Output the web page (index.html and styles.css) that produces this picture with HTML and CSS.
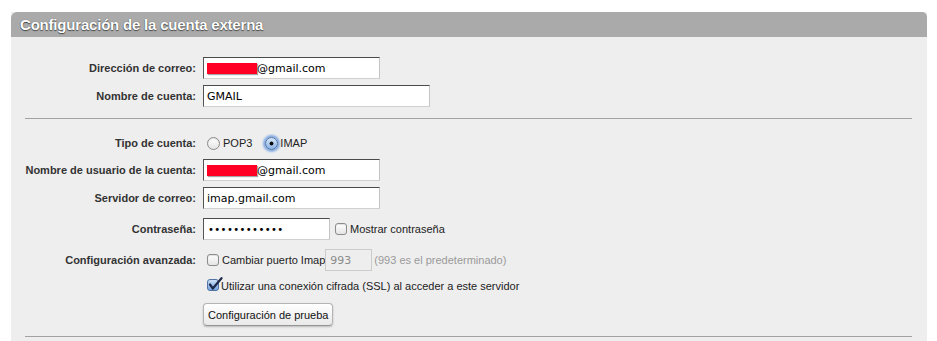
FILE: index.html
```html
<!DOCTYPE html>
<html lang="es">
<head>
    <meta charset="UTF-8">
    <title>Configuración de la cuenta externa</title>
    <link rel="stylesheet" href="styles.css">
</head>
<body>
<div class="panel">
    <div class="panel-header">Configuración de la cuenta externa</div>

    <div class="section section-account">
        <div class="row">
            <label class="row-label">Dirección de correo:</label>
            <div class="textbox textbox-medium"><span class="redacted"></span>@gmail.com</div>
        </div>
        <div class="row row-next">
            <label class="row-label">Nombre de cuenta:</label>
            <input class="textbox textbox-wide" type="text" value="GMAIL">
        </div>
    </div>

    <div class="section section-server">
        <div class="row">
            <label class="row-label">Tipo de cuenta:</label>
            <input class="radio" type="radio" name="type" id="pop3">
            <label class="option" for="pop3">POP3</label>
            <input class="radio radio-on" type="radio" name="type" id="imap" checked>
            <label class="option" for="imap">IMAP</label>
        </div>
        <div class="row row-user">
            <label class="row-label">Nombre de usuario de la cuenta:</label>
            <div class="textbox textbox-medium"><span class="redacted"></span>@gmail.com</div>
        </div>
        <div class="row row-next">
            <label class="row-label">Servidor de correo:</label>
            <input class="textbox textbox-medium" type="text" value="imap.gmail.com">
        </div>
        <div class="row row-loose">
            <label class="row-label">Contraseña:</label>
            <input class="textbox textbox-password" type="password" value="xxxxxxxxxxxx">
            <input class="checkbox checkbox-after-field" type="checkbox" id="show-pass">
            <label class="option" for="show-pass">Mostrar contraseña</label>
        </div>
        <div class="row row-loose">
            <label class="row-label">Configuración avanzada:</label>
            <input class="checkbox" type="checkbox" id="port">
            <label class="option" for="port">Cambiar puerto Imap</label>
            <input class="textbox textbox-port" type="text" value="993" disabled>
            <span class="hint">(993 es el predeterminado)</span>
        </div>
        <div class="row row-indent row-ssl">
            <svg class="checked-box" width="16" height="15" viewBox="0 0 16 15">
                <defs>
                    <linearGradient id="aqua" x1="0" y1="0" x2="0" y2="1">
                        <stop offset="0" stop-color="#d3e4f8"/>
                        <stop offset="0.5" stop-color="#9bbfea"/>
                        <stop offset="1" stop-color="#74a3e0"/>
                    </linearGradient>
                </defs>
                <rect x="0.5" y="2.5" width="11" height="11" rx="2.5" fill="url(#aqua)" stroke="#5273a3"/>
                <path d="M3 7.5 L5.8 11.5 L14.5 1.2" fill="none" stroke="#1c2a48" stroke-width="2.2" stroke-linecap="round" stroke-linejoin="round"/>
            </svg>
            <label class="option">Utilizar una conexión cifrada (SSL) al acceder a este servidor</label>
        </div>
        <div class="row row-indent row-button">
            <button class="button" type="button">Configuración de prueba</button>
        </div>
    </div>
</div>
</body>
</html>
```

FILE: styles.css
```css
body {
    margin: 0;
    background-color: #fff;
    font-family: "Liberation Sans", Arial, sans-serif;
    font-size: 11px;
    color: #222;
}

.panel {
    margin: 12px 10px 0 11px;
    min-height: 329px;
    background-color: #eee;
}

.panel-header {
    height: 25px;
    line-height: 25px;
    padding-left: 9px;
    background-color: #aaa;
    border-radius: 6px 5px 0 0;
    color: #fff;
    font-size: 15px;
    font-weight: bold;
    letter-spacing: -0.2px;
    text-shadow: 0 1px 1px rgba(0, 0, 0, 0.55), 0 0 1px rgba(0, 0, 0, 0.45);
}

.section {
    margin: 0 15px 0 14px;
    border-bottom: 1px solid #a2a2a2;
}

.section-account {
    padding: 20px 0 11px;
}

.section-server {
    padding: 13px 0 10px;
}

.row {
    display: flex;
    align-items: center;
    min-height: 22px;
}

.row-next {
    margin-top: 6px;
}

.row-user {
    margin-top: 5px;
}

.row-loose {
    margin-top: 9px;
}

.row-ssl {
    margin-top: 4px;
}

.row-button {
    margin-top: 6px;
}

.row-indent {
    padding-left: 178px;
}

.row-label {
    flex-shrink: 0;
    width: 171px;
    margin-right: 7px;
    text-align: right;
    font-weight: bold;
    color: #333;
}

.textbox {
    box-sizing: border-box;
    height: 22px;
    margin: 0;
    padding: 0 3px;
    border: 1px solid;
    border-color: #4a4a4a #c4c4c4 #d0d0d0 #555;
    border-radius: 0;
    background-color: #fff;
    font-family: "DejaVu Sans", sans-serif;
    font-size: 11px;
    color: #000;
    outline: none;
}

div.textbox {
    display: flex;
    align-items: center;
}

.textbox-medium {
    width: 177px;
}

.textbox-wide {
    width: 227px;
}

.textbox-password {
    width: 127px;
    padding-left: 4px;
    font-size: 10px;
    letter-spacing: 0.4px;
}

.textbox-port {
    width: 47px;
    padding-left: 4px;
    border-color: #cbcbcb;
    background-color: #eee;
    color: #8a8a8a;
}

.redacted {
    width: 50px;
    height: 11px;
    margin-top: 1px;
    background-color: #ff0024;
    box-shadow: 1px 1px 1px rgba(0, 0, 0, 0.35);
}

.radio,
.checkbox {
    appearance: none;
    -webkit-appearance: none;
    flex-shrink: 0;
    box-sizing: border-box;
    width: 12px;
    height: 12px;
    margin: 0 0 0 4px;
    border: 1px solid #8c8c8c;
    background: linear-gradient(#fff, #e4e4e4);
    box-shadow: inset 0 1px 1px rgba(0, 0, 0, 0.12);
}

.radio {
    width: 13px;
    height: 13px;
    border-radius: 50%;
}

.radio-on {
    margin-left: 13px;
    border-color: #4d6f9f;
    background: radial-gradient(circle, #0c0c0c 0, #0c0c0c 1.6px, transparent 2.3px),
        linear-gradient(#d8e7f9, #8cb4e6);
    box-shadow: 0 0 2px 2px rgba(96, 150, 224, 0.75);
}

.checkbox {
    border-radius: 3px;
}

.checkbox-after-field {
    margin-left: 5px;
}

.option {
    margin-left: 3px;
    color: #222;
}

.radio-on + .option {
    margin-left: 2px;
}

.checked-box {
    flex-shrink: 0;
    margin: -3px 0 0 4px;
}

.row-ssl .option {
    margin-left: -2px;
}

.hint {
    margin-left: 2px;
    color: #9a9a9a;
}

.button {
    box-sizing: border-box;
    height: 23px;
    padding: 0 4px;
    border: 1px solid #b4b4b4;
    border-bottom-color: #959595;
    border-radius: 4px;
    background: linear-gradient(#fff, #f4f4f4 50%, #e9e9e9);
    box-shadow: 0 1px 2px rgba(0, 0, 0, 0.22);
    font-family: "Liberation Sans", Arial, sans-serif;
    font-size: 11px;
    color: #111;
    cursor: pointer;
}
```
